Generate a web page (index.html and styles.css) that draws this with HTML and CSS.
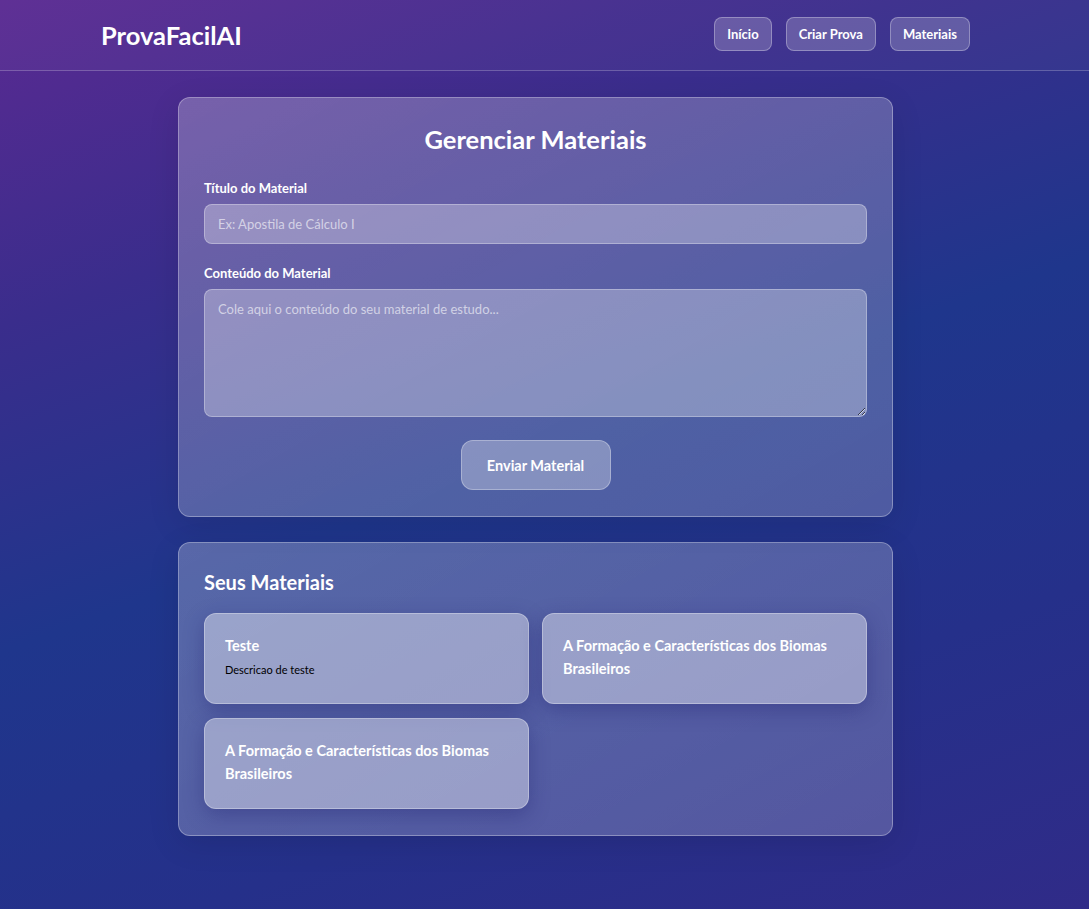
FILE: index.html
```html
<!DOCTYPE html>
<html lang="pt-BR">
<head>
<meta charset="utf-8">
<title>ProvaFacilAI</title>
<link rel="stylesheet" href="styles.css">
</head>
<body>
<header class="topbar">
  <div class="topbar-inner">
    <div class="logo">ProvaFacilAI</div>
    <nav class="nav">
      <a class="nav-btn" href="#">Início</a>
      <a class="nav-btn" href="#">Criar Prova</a>
      <a class="nav-btn" href="#">Materiais</a>
    </nav>
  </div>
</header>
<div class="page">
  <main class="main">
    <section class="card form-card">
      <h1 class="card-title">Gerenciar Materiais</h1>
      <label class="label" for="t">Título do Material</label>
      <input class="input" id="t" type="text" placeholder="Ex: Apostila de Cálculo I">
      <label class="label" for="c">Conteúdo do Material</label>
      <textarea class="textarea" id="c" placeholder="Cole aqui o conteúdo do seu material de estudo..."></textarea>
      <div class="actions"><button class="submit">Enviar Material</button></div>
    </section>
    <section class="card list-card">
      <h2 class="list-title">Seus Materiais</h2>
      <div class="grid">
        <div class="item"><div class="item-title">Teste</div><div class="item-desc">Descricao de teste</div></div>
        <div class="item"><div class="item-title">A Formação e Características dos Biomas Brasileiros</div></div>
        <div class="item"><div class="item-title">A Formação e Características dos Biomas Brasileiros</div></div>
      </div>
    </section>
  </main>
</div>
</body>
</html>
```
FILE: styles.css
```css
* { box-sizing: border-box; }
html, body { margin: 0; padding: 0; }
body {
  min-height: 909px;
  font-family: "Lato", "Open Sans", sans-serif;
  color: #fff;
  background: linear-gradient(160deg, #5a2a92 0%, #3a2d8c 25%, #1f368c 50%, #25308a 75%, #302b88 100%);
}
.topbar {
  height: 71px;
  padding-right: 18px;
  border-bottom: 1px solid rgba(255,255,255,0.22);
  background: rgba(255,255,255,0.03);
}
.topbar-inner {
  width: 869px;
  margin: 0 0 0 101px;
  height: 70px;
  display: flex;
  align-items: center;
  justify-content: space-between;
}
.logo { font-size: 25.5px; font-weight: 700; }
.nav { display: flex; gap: 14px; margin-top: -3px; }
.nav-btn {
  color: #fff;
  text-decoration: none;
  font-size: 13px;
  font-weight: 700;
  height: 34px;
  line-height: 32px;
  padding: 0 12px;
  border: 1px solid rgba(255,255,255,0.3);
  border-radius: 8px;
  background: rgba(255,255,255,0.2);
}
.page { padding-right: 18px; }
.main {
  width: 715px;
  margin: 26px auto 0;
  display: flex;
  flex-direction: column;
  gap: 25px;
}
.card {
  border: 1px solid rgba(255,255,255,0.3);
  border-radius: 12px;
  background: linear-gradient(150deg, rgba(255,255,255,0.25), rgba(255,255,255,0.2));
  box-shadow: 0 8px 32px rgba(0,0,0,0.1);
  padding: 0 25px;
}
.form-card { height: 420px; padding-top: 22px; }
.card-title {
  margin: 0 0 22px;
  text-align: center;
  font-size: 25.5px;
  font-weight: 700;
  line-height: 38px;
}
.label { display: block; font-size: 13px; font-weight: 700; line-height: 16px; margin-bottom: 8px; }
.input, .textarea {
  display: block;
  width: 100%;
  border: 1px solid rgba(255,255,255,0.3);
  border-radius: 8px;
  background: rgba(255,255,255,0.3);
  color: #fff;
  padding: 0 13px;
  outline: none;
  font-family: "Lato", sans-serif;
}
.input {
  height: 40px;
  margin-bottom: 21px;
  font-size: 13px;
}
.textarea {
  height: 128px;
  padding-top: 11px;
  font-size: 13px;
  resize: vertical;
}
.input::placeholder, .textarea::placeholder { color: rgba(255,255,255,0.6); }
.actions { display: flex; justify-content: center; margin-top: 23px; }
.submit {
  width: 150px;
  height: 50px;
  border: 1px solid rgba(255,255,255,0.3);
  border-radius: 12px;
  background: rgba(255,255,255,0.3);
  color: #fff;
  font-family: "Lato", sans-serif;
  font-size: 14.5px;
  font-weight: 700;
  padding: 0;
}
.list-card { height: 294px; padding-top: 26px; }
.list-title { margin: 0 0 18px; font-size: 20px; font-weight: 700; line-height: 26px; }
.grid { display: grid; grid-template-columns: 1fr 1fr; gap: 14px 13px; }
.item {
  height: 91px;
  padding: 20px 20px;
  border: 1px solid rgba(255,255,255,0.3);
  border-radius: 12px;
  background: rgba(255,255,255,0.4);
  box-shadow: 0 6px 20px rgba(30,30,110,0.35);
}
.item-title { font-size: 14.5px; font-weight: 700; line-height: 23px; }
.item-desc { font-size: 11px; color: #000; margin-top: 6px; }
```
